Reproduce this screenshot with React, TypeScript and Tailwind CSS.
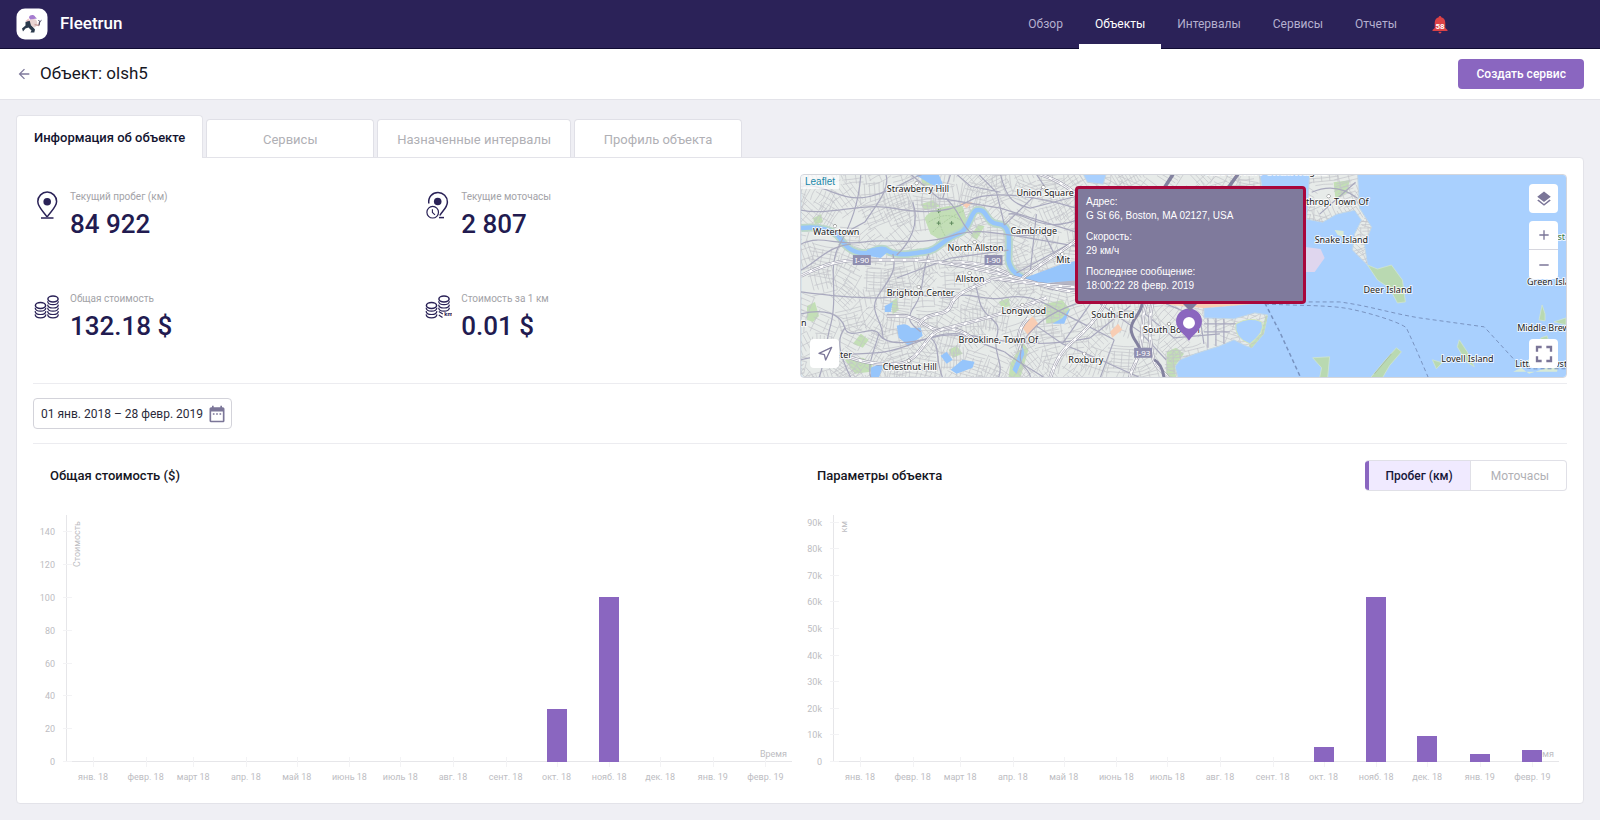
import React from "react";
import { MdArrowBack, MdDateRange, MdLayers, MdAdd, MdRemove, MdFullscreen } from "react-icons/md";
import { Navigation } from "lucide-react";

const NAV = ["Обзор", "Объекты", "Интервалы", "Сервисы", "Отчеты"];
const TABS = ["Сервисы", "Назначенные интервалы", "Профиль объекта"];

function Logo() {
  return (
    <svg viewBox="0 0 32 32" className="size-8" aria-hidden="true">
      <rect x=".5" y=".5" width="31" height="31" rx="8.500" fill="#fff" />
      <path d="M9.500 14 13 12.500 16.500 14 16 18 19 21.500 18.300 24.500 14.500 24.500 15.500 22.500 12.500 19.500 9.500 20.500 7 23.500 6 20.500 9.500 17.500Z" fill="#2b3a4c" />
      <path d="M13.500 12c3-1.500 6.500-1.500 7.500 1.500s-.5 5.500-3 6L15 17.500Z" fill="#e9d4d2" />
      <path d="M18.500 16.500 22.500 17.500 23.500 14" stroke="#c9a2a0" strokeWidth="1.300" fill="none" />
      <path d="M22.500 12 23.800 13.800 25.500 12.300M23.800 13.800 23 17.500" stroke="#45455f" strokeWidth="1" fill="none" />
      <path d="M13 9.500C13.600 6.600 18 6.200 19.300 9L21 10.500 14 11.500Z" fill="#a67ccf" />
      <path d="M9 13.500 12.500 10.500 13.500 13Z" fill="#edc0c2" />
    </svg>
  );
}

function Bell() {
  return (
    <svg viewBox="0 0 16 18" className="h-[18px] w-4" aria-label="58 уведомлений">
      <path d="M8 0c.8 0 1.300.6 1.300 1.300C12 2 13.300 4.200 13.300 7v5L15.500 14v1H.5v-1L2.700 12V7C2.700 4.200 4 2 6.700 1.300 6.700.6 7.200 0 8 0ZM6.500 15.800h3c0 1-.7 1.700-1.500 1.700s-1.500-.7-1.500-1.700Z" fill="#dc4246" />
      <text x="8" y="12.500" textAnchor="middle" fontSize="8" fontWeight="700" fill="#fff">58</text>
    </svg>
  );
}

const INK = "#2a2257";

function PinIcon() {
  return (
    <svg viewBox="0 0 28 30" className="h-[30px] w-7" fill="none" stroke={INK} strokeWidth="1.500">
      <path d="M14 27C12 23 4.800 17.500 4.800 11.500a9.400 9.400 0 0 1 18.800 0C23.600 17.500 16 23 14.200 27" />
      <circle cx="14.200" cy="11.800" r="3.800" fill={INK} stroke="none" />
      <path d="M8 28h12.500" />
    </svg>
  );
}

function PinClockIcon() {
  return (
    <svg viewBox="0 0 28 30" className="h-[30px] w-7" fill="none" stroke={INK} strokeWidth="1.500">
      <path d="M4.800 13.500C4 7 8.500 2.500 14 2.500a9.400 9.400 0 0 1 9.400 9.400C23.400 17.500 18 21.500 15.800 25.500" />
      <circle cx="13.700" cy="11.500" r="3.800" fill={INK} stroke="none" />
      <circle cx="8.700" cy="22.200" r="5.800" strokeWidth="1.200" fill="#fff" />
      <path d="M8.400 19.200V22.500L11 24.800" strokeWidth="1.100" />
      <path d="M15 27.600h5" />
    </svg>
  );
}

function Coins({ km }: { km?: boolean }) {
  const arc = (x: number, y: number) => `M${x - 5.400} ${y - 0.700}c.2 2 2.400 3.400 5.400 3.400s5.200-1.400 5.400-3.400`;
  return (
    <svg viewBox="0 0 28 30" className="h-[30px] w-7" fill="none" stroke={INK} strokeWidth="1.200">
      <ellipse cx="7.500" cy="13.500" rx="5.100" ry="2.900" strokeWidth="1.500" />
      <ellipse cx="20" cy="7" rx="5.100" ry="2.900" strokeWidth="1.500" />
      {[16.500, 19.800, 23.100].map((y) => <path key={y} d={arc(7.500, y)} />)}
      {(km ? [10, 13.300, 16.500] : [10, 13.300, 16.500, 19.800, 23.100]).map((y) => <path key={y} d={arc(20, y)} />)}
      {km && <path d="M14.800 19.500 18.800 22M14.800 23 18.500 25.500" />}
      {km && <text x="20.300" y="24" fontSize="6" fontWeight="700" fill={INK} stroke="none">km</text>}
    </svg>
  );
}

function Stat({ icon, label, value }: { icon: React.ReactNode; label: string; value: string }) {
  return (
    <div className="flex items-start">
      <div className="w-[37px] shrink-0">{icon}</div>
      <dl>
        <dt className="text-[10px] leading-[14px] text-[#a3a3a8]">{label}</dt>
        <dd className="mt-1 text-[26px] leading-8 font-medium text-[#221b50]">{value}</dd>
      </dl>
    </div>
  );
}

function seeded(seed: number) {
  let s = seed;
  return () => {
    s = (s * 16807) % 2147483647;
    return s / 2147483647;
  };
}

function buildStreets() {
  const rnd = seeded(4217);
  let d = "";
  for (let cy = -4; cy < 210; cy += 21) {
    for (let cx = -6; cx < 600; cx += 25) {
      const a = rnd() * Math.PI;
      const ca = Math.cos(a);
      const sa = Math.sin(a);
      const ox = cx + rnd() * 8;
      const oy = cy + rnd() * 8;
      const half = 10 + rnd() * 6;
      const step = 3 + rnd() * 2.5;
      if (rnd() < 0.08) continue;
      for (let o = -half; o <= half; o += step) {
        const bend = (rnd() - 0.5) * 5;
        const h = half * (0.6 + rnd() * 0.5);
        d += `M${(ox + o * ca - h * sa).toFixed(1)} ${(oy + o * sa + h * ca).toFixed(1)}Q${(ox + o * ca + bend).toFixed(1)} ${(oy + o * sa + bend).toFixed(1)} ${(ox + o * ca + h * sa).toFixed(1)} ${(oy + o * sa - h * ca).toFixed(1)}`;
      }
      for (let o = -half; o <= half; o += step * 2.2) {
        const h = half * (0.5 + rnd() * 0.5);
        d += `M${(ox - o * sa - h * ca).toFixed(1)} ${(oy + o * ca - h * sa).toFixed(1)}L${(ox - o * sa + h * ca).toFixed(1)} ${(oy + o * ca + h * sa).toFixed(1)}`;
      }
    }
  }
  return d;
}

const STREETS = buildStreets();

const LAND =
  "M0 0H283L287 8 303 10 306 0H460L462 12V129L404 134 404 144 434 145 455 139 468 141 464 160 452 174 446 172 434 166 420 172 395 180 380 186 375 193 378 204H0ZM510 0H558L560 34 572 53 565 71 568 91 553 76 555 60 562 46 555 36 537 40 523 48 507 45Z";

const ARTERIALS = [
  "M0 12C25 8 40 30 70 22S110 3 122 0", "M0 36C30 42 60 28 92 34S150 38 168 27 230 20 276 34",
  "M60 0C58 30 50 50 38 72S38 120 30 150 24 190 18 204", "M0 70C20 60 34 72 62 68S120 72 150 62 200 60 276 72",
  "M85 0C90 14 76 30 64 48L38 62", "M0 118C30 122 55 124 76 124S120 118 150 124", "M110 0 138 24 200 34 276 58",
  "M112 28C120 50 108 70 96 81M145 24C160 36 160 52 172 60", "M0 140C24 134 40 140 44 154S72 150 78 160 100 172 130 164 170 166 204 178",
  "M92 80C98 98 84 110 76 124S84 150 82 165", "M128 80C120 100 124 118 114 132S110 150 120 158", "M96 104 150 84 208 76",
  "M0 186C30 178 58 182 84 178S130 158 158 160 220 178 290 164", "M200 0C206 26 214 30 230 34L276 22",
  "M216 99 276 66M204 51 244 12 236 0", "M172 104C180 120 176 130 186 140S200 150 196 164 204 190 198 204",
  "M276 130C258 136 246 142 236 152S222 166 220 180 230 194 230 204", "M150 124C166 116 184 128 204 124S236 124 260 138L314 166",
  "M130 164C140 172 134 184 142 204M204 178C214 186 222 190 244 204", "M236 152 262 170 300 186 340 204",
  "M290 164 330 132M262 170 290 130M314 166 300 204M345 140 374 164 420 160", "M300 130 340 158 366 186M366 130 400 144 404 170",
  "M404 150H438M404 158H430M408 144V174M416 144V172M424 145V170", "M44 154C34 166 40 184 50 204M78 160C74 176 66 190 70 204",
  "M0 96C14 90 26 72 50 70M178 0 196 18 204 51M156 0 170 12 200 18M150 0 142 24", "M208 40C222 36 240 60 276 46M216 62 244 60 256 84M236 40 230 96",
  "M512 18C530 10 545 14 558 24M520 40 556 8",
];

const FREEWAYS = [
  "M0 102C23 90 40 86 60 86H113C156 88 176 96 200 100S250 116 276 118", "M190 104C220 108 250 112 276 113",
  "M86 142H104C120 144 130 158 140 156S160 154 176 168", "M38 180C60 188 76 192 98 190S124 160 140 156C180 146 210 138 246 124",
  "M118 152C124 136 146 144 150 132S166 116 190 106", "M222 104C244 86 262 78 276 66V20C262 8 250 4 240 0",
  "M152 88C180 88 196 94 208 100", "M250 204C254 190 262 176 272 168S296 146 306 128", "M346 130C340 146 344 160 340 176S330 196 330 204",
  "M352 130C348 150 350 166 352 180S362 196 368 204", "M220 176C216 164 218 154 228 144",
];

const PARKS = [
  "M124 44C130 34 150 30 162 32L166 48 158 58 140 66 130 60Z", "M6 132 14 128 18 142 12 148 6 146Z", "M120 30 132 26 140 32 124 36Z",
  "M170 62 178 50 184 52 176 66Z", "M44 186 62 184 72 190 70 198 54 200Z", "M244 130 262 126 270 136 262 148 246 150Z",
  "M210 190 222 168 228 176 220 204 208 204Z", "M367 178 376 174 384 180 375 192 376 204H366Z", "M12 44 20 40 22 48 14 50Z",
  "M52 170 60 160 68 166 62 174Z", "M120 0 132 0 134 10 122 12Z", "M148 176 156 172 162 180 152 184Z", "M534 8 550 6 548 18 536 26Z",
  "M466 141 471 144 466 160 452 176 449 172 461 160Z", "M198 128 208 124 210 132 202 134Z", "M90 128 96 124 98 136 92 140Z",
];

const LABELS: { t: string; x: number; y: number; dot?: [number, number] }[] = [
  { t: "Strawberry Hill", x: 86, y: 18, dot: [116, 9] }, { t: "Watertown", x: 12, y: 61, dot: [34, 52] },
  { t: "Union Square", x: 216, y: 22, dot: [243, 13] }, { t: "Cambridge", x: 210, y: 60 },
  { t: "North Allston", x: 147, y: 77, dot: [174, 68] }, { t: "Mit", x: 256, y: 89, dot: [262, 80] },
  { t: "Allston", x: 155, y: 108, dot: [169, 99] }, { t: "Brighton Center", x: 86, y: 122, dot: [118, 113] },
  { t: "Longwood", x: 201, y: 140, dot: [222, 131] }, { t: "Brookline, Town Of", x: 158, y: 169 },
  { t: "Chestnut Hill", x: 82, y: 196, dot: [108, 187] }, { t: "Roxbury", x: 268, y: 189, dot: [284, 180] },
  { t: "South End", x: 291, y: 144, dot: [311, 135] }, { t: "South Boston", x: 343, y: 159, dot: [369, 150] },
  { t: "Winthrop, Town Of", x: 490, y: 31, dot: [529, 22] }, { t: "Snake Island", x: 515, y: 69 },
  { t: "Deer Island", x: 564, y: 119 }, { t: "Green Isla", x: 728, y: 111 }, { t: "Middle Brews", x: 718, y: 157 },
  { t: "Lovell Island", x: 642, y: 188 }, { t: "Little Brewste", x: 716, y: 193 }, { t: "Harbor View / Orient Heights", x: 406, y: 1 },
  { t: "ter", x: 39, y: 184 }, { t: "n", x: 0, y: 152 },
];

const SHIELDS: [string, number, number][] = [["I-90", 52, 81], ["I-90", 184, 81], ["I-93", 334, 174]];

function MapDrawing() {
  return (
    <svg viewBox="0 0 767 204" preserveAspectRatio="xMidYMid slice" className="block size-full" aria-label="Карта Бостона">
      <defs>
        <clipPath id="land"><path d={LAND} /></clipPath>
      </defs>
      <rect width="767" height="204" fill="#a9d0fe" />
      <path d={LAND} fill="#e7ebe9" stroke="#c4d8e6" strokeWidth="1" />
      <g clipPath="url(#land)">
        {PARKS.map((d) => <path key={d} d={d} fill="#c3dfb6" />)}
        <path d={STREETS} fill="none" stroke="#c3c4ca" strokeWidth="0.700" />
        <path d="M124 44C130 34 150 30 162 32L166 48 158 58 140 66 130 60Z" fill="#c3dfb6" fillOpacity=".85" />
        <path d="M128 48Q146 36 160 46M132 58Q146 44 164 36M140 34Q136 50 146 64" fill="none" stroke="#a6c79b" strokeWidth=".8" strokeDasharray="2 1" />
        <path d="M138 35v4M136 37h4M138 47v4M136 49h4M151 47v4M149 49h4" stroke="#5f8a5d" strokeWidth="1" />
        <path d="M160 29 172 28 166 34ZM222 154 232 142 238 150 228 162ZM310 158 318 150 322 156 312 164ZM360 130H460V132L404 134Z" fill="#f8cdb4" />
        <path d="M240 111 276 104V119L250 116Z" fill="#b5b5c4" />
        <path d="M0 54C18 52 34 56 39 64 46 75 54 80 66 79 74 78 76 73 84 75 96 84 112 79 123 78 139 76 140 66 159 59 169 55 170 38 176 36 188 34 184 49 198 50 212 51 208 70 208 86 210 98 218 102 228 106" fill="none" stroke="#bbd7c8" strokeWidth="8" />
        <path d="M0 54C18 52 34 56 39 64 46 75 54 80 66 79 74 78 76 73 84 75 96 84 112 79 123 78 139 76 140 66 159 59 169 55 170 38 176 36 188 34 184 49 198 50 212 51 208 70 208 86 210 98 218 102 228 106" fill="none" stroke="#96c5fb" strokeWidth="4.500" />
        <path d="M66 76Q78 70 88 77L80 84 68 82ZM224 104 243 97 262 90 280 86V106L246 109 226 108ZM96 152Q106 148 110 154L120 154 122 162 108 172 98 164ZM84 132 92 128 90 138 84 138ZM150 196 162 186 174 188 172 194 156 200ZM70 194 84 188 78 204H70ZM114 0H138L144 14 130 10ZM212 196 222 172 224 180 216 200ZM140 182 146 178 152 186 146 190ZM252 150 262 144 270 134 264 150Z" fill="#96c5fb" />
        {ARTERIALS.map((d) => <path key={d} d={d} fill="none" stroke="#a9a9be" strokeWidth="1.200" />)}
        {FREEWAYS.map((d) => (
          <g key={d} fill="none">
            <path d={d} stroke="#9a9aab" strokeWidth="3.600" />
            <path d={d} stroke="#fff" strokeWidth="2.500" />
            <path d={d} stroke="#9a9aab" strokeWidth=".7" strokeDasharray="9 3" />
          </g>
        ))}
        <path d="M342 130C340 142 330 146 331 156S338 168 340 176M354 186Q362 190 364 204" fill="none" stroke="#83829f" strokeWidth="3" />
        <path d="M373 0 364 14M438 0 428 14" stroke="#83829f" strokeWidth="3.500" />
      </g>
      <path d="M436 150Q450 142 462 148 466 158 450 170 434 164 436 150Z" fill="#a9d0fe" stroke="#d3e5bb" />
      <path d="M506 73 521 75 525 84 515 98 505 98Z" fill="#dfd6ee" />
      <path d="M535 56 544 57 544 63 538 61ZM714 198 722 194 730 200 760 190 758 198Z" fill="#d8ead6" />
      <path d="M568 91 578 95 592 91 603 106 606 128 598 129 590 114 578 106ZM597 174 602 178 590 192 583 204H571L586 186ZM513 184 530 183 528 204H520L522 194ZM660 166 668 178 675 193 667 188 658 173ZM633 186 643 189 637 195ZM743 131 746 140 746 147 740 146ZM755 148 767 144V151ZM742 164 748 162 750 168H740Z" fill="#b9d9b1" stroke="#cfe4d2" strokeWidth=".8" />
      <path d="M575 200 592 180" stroke="#a3b5a0" strokeWidth=".8" fill="none" />
      <g fill="none" stroke="#7893c0" strokeWidth="1" strokeDasharray="4 3">
        <path d="M460 128H540C570 132 590 139 620 144L685 153 717 188Q724 196 740 195H767" />
        <path d="M465 130C500 132 530 131 550 135S600 148 607 154L617 176 629 204" />
        <path d="M465 129 480 158 501 204" strokeWidth="1.500" />
      </g>
      {SHIELDS.map(([t, x, y]) => (
        <g key={`${t}${x}`}>
          <rect x={x} y={y} width="18" height="10" fill="#8f8eaf" />
          <text x={x + 9} y={y + 8} textAnchor="middle" fontSize="8" fill="#fff" className="font-['Noto_Sans',sans-serif]">{t}</text>
        </g>
      ))}
      <g fontSize="9" fill="#232323" stroke="#fff" strokeOpacity=".8" strokeWidth="2" paintOrder="stroke" strokeLinejoin="round" className="font-['Noto_Sans',sans-serif]">
        {LABELS.map((l) => (
          <React.Fragment key={l.t}>
            {l.dot && <circle cx={l.dot[0]} cy={l.dot[1]} r="1.500" fill="#fff" stroke="#555" strokeOpacity="1" strokeWidth=".8" />}
            <text x={l.x} y={l.y}>{l.t}</text>
          </React.Fragment>
        ))}
        <text x="753" y="66" fill="#3b7a3b">ost</text>
      </g>
      <path d="M389 167C386 161 376 156 376 147.500a13 13 0 0 1 26 0C402 156 392 161 389 167Z" fill="#8b66bf" />
      <circle cx="389" cy="149" r="6" fill="#fff" />
    </svg>
  );
}

const mapButton = "flex size-[29px] items-center justify-center bg-white text-[#7b7698]";

function MapCard() {
  return (
    <div className="relative h-[204px] overflow-hidden rounded border border-[#d4d6dc]">
      <MapDrawing />
      <a href="#leaflet" className="absolute top-0 left-0 bg-white/70 px-1 font-['Liberation_Sans',sans-serif] text-[10px] leading-[14px] text-[#1787a8]">Leaflet</a>
      <div className="absolute top-[11px] left-[274px] h-[118px] w-[231px] rounded-sm border-3 border-[#a8073c] bg-[#7f7a9c] px-2 py-1.5 font-['Liberation_Sans',sans-serif] text-[10px] leading-[14px] text-white">
        <p>Адрес:<br />G St 66, Boston, MA 02127, USA</p>
        <p className="my-[7px]">Скорость:<br />29 км/ч</p>
        <p>Последнее сообщение:<br />18:00:22 28 февр. 2019</p>
        <svg viewBox="0 0 14 7" className="absolute top-[115px] left-[105px] h-[7px] w-3.5" aria-hidden="true">
          <path d="M0 0H14L7 7Z" fill="#7f7a9c" />
        </svg>
      </div>
      <div className="absolute top-[9px] right-2 flex flex-col gap-2">
        <button aria-label="Слои" className={`${mapButton} rounded`}><MdLayers className="size-[18px]" /></button>
        <div className="flex flex-col divide-y divide-[#d6d6de] overflow-hidden rounded">
          <button aria-label="Увеличить" className={mapButton}><MdAdd className="size-4" /></button>
          <button aria-label="Уменьшить" className={mapButton}><MdRemove className="size-4" /></button>
        </div>
      </div>
      <button aria-label="Показать объект" className={`${mapButton} absolute bottom-[9px] left-[9px] rounded`}><Navigation className="size-4" strokeWidth={2} /></button>
      <button aria-label="На весь экран" className={`${mapButton} absolute right-2 bottom-[9px] rounded`}><MdFullscreen className="size-7" /></button>
    </div>
  );
}

const MONTHS: [string, number][] = [
  ["янв. 18", 0], ["февр. 18", 31], ["март 18", 59], ["апр. 18", 90], ["май 18", 120], ["июнь 18", 151], ["июль 18", 181],
  ["авг. 18", 212], ["сент. 18", 243], ["окт. 18", 273], ["нояб. 18", 304], ["дек. 18", 334], ["янв. 19", 365], ["февр. 19", 396],
];

function BarChart({ unit, ticks, step, values }: { unit: string; ticks: string[]; step: number; values: number[] }) {
  const x = (days: number) => 60 + days * 1.698;
  return (
    <svg viewBox="0 0 767 290" className="block w-full" role="img" aria-label={unit}>
      <g stroke="#f3f3f5" strokeWidth="1">
        <path d="M33.500 15V262M33 261.500H759" stroke="#e6e6e9" />
        {ticks.map((t, i) => <path key={t} d={`M30 ${Math.round(261 - i * step) + 0.5}h9`} />)}
        {MONTHS.map(([m, d]) => <path key={m} d={`M${Math.round(x(d)) + 0.5} 257v10`} />)}
      </g>
      <g fontSize="9" fill="#bdbdc2">
        {ticks.map((t, i) => <text key={t} x="22" y={Math.round(265 - i * step)} textAnchor="end">{t}</text>)}
        {MONTHS.map(([m, d]) => <text key={m} x={x(d)} y="280" textAnchor="middle">{m}</text>)}
        <text x="754" y="257" textAnchor="end">Время</text>
        <text transform="rotate(-90 47 21)" x="47" y="21" textAnchor="end">{unit}</text>
      </g>
      {values.map((v, i) => v > 0 && (
        <rect key={MONTHS[i][0]} x={Math.round(x(MONTHS[i][1])) - 10} y={262 - v} width="20" height={v} fill="#8a66c0" />
      ))}
    </svg>
  );
}

const COST = [0, 0, 0, 0, 0, 0, 0, 0, 0, 53, 165, 0, 0, 0];
const MILEAGE = [0, 0, 0, 0, 0, 0, 0, 0, 0, 15, 165, 26, 8, 12];

export default function App() {
  return (
    <div className="flex min-h-screen flex-col bg-[#efeff4] font-['Roboto',sans-serif] text-[#16161f]">
      <header className="flex h-[49px] items-center border-b border-[#100b33] bg-[#2b2258] pr-[152px] pl-4">
        <Logo />
        <span className="ml-3 text-[17px] font-medium text-white">Fleetrun</span>
        <nav className="ml-auto flex h-full">
          {NAV.map((n) => (
            <a key={n} href="#nav" className={n === "Объекты" ? "-mb-px flex h-[49px] items-center border-b-5 border-white px-4 pt-1 text-[12px] text-white" : "flex items-center px-4 text-[12px] text-[#b5b0cf]"}>{n}</a>
          ))}
        </nav>
        <button className="ml-[19px] pt-0.5"><Bell /></button>
      </header>

      <div className="flex h-[51px] items-center border-b border-[#e3e3e9] bg-white px-4">
        <a href="#back" aria-label="Назад" className="text-[#7f7a9c]"><MdArrowBack className="size-4" /></a>
        <h1 className="ml-2 text-[17px]">Объект: olsh5</h1>
        <button className="ml-auto h-[30px] rounded bg-[#8a66c0] px-[18px] text-[12px] font-medium text-white">Создать сервис</button>
      </div>

      <main className="flex flex-1 flex-col px-4 pt-[15px] pb-4">
        <div className="flex items-end gap-[3px]" role="tablist">
          <button role="tab" aria-selected="true" className="relative -mb-px h-[43px] rounded-t border border-b-0 border-[#e3e3e9] bg-white px-[17px] pt-0.5 text-[13px] font-medium text-[#131430]">Информация об объекте</button>
          {TABS.map((t) => (
            <button key={t} role="tab" className="h-[38px] min-w-[168px] rounded-t border border-b-0 border-[#e0e0e7] bg-white px-[19px] pt-0.5 text-[13px] text-[#b0b0b5]">{t}</button>
          ))}
        </div>

        <section className="flex-1 rounded rounded-tl-none border border-[#e3e3e9] bg-white px-4 pb-3">
          <div className="grid grid-cols-2 border-b border-[#ececf0] pt-4 pb-[5px]">
            <div className="grid grid-cols-[51%_49%] content-start gap-y-[52px] pt-4">
              <Stat icon={<PinIcon />} label="Текущий пробег (км)" value="84 922" />
              <Stat icon={<PinClockIcon />} label="Текущие моточасы" value="2 807" />
              <Stat icon={<Coins />} label="Общая стоимость" value="132.18 $" />
              <Stat icon={<Coins km />} label="Стоимость за 1 км" value="0.01 $" />
            </div>
            <MapCard />
          </div>

          <div className="border-b border-[#ececf0] py-3.5">
            <button className="flex h-[31px] w-[199px] items-center justify-between rounded border border-[#d3d3da] pr-1 pl-[7px] text-[12px] whitespace-nowrap text-[#2a2a3a]">
              01 янв. 2018 – 28 февр. 2019
              <MdDateRange className="size-5 text-[#7b7698]" />
            </button>
          </div>

          <div className="grid grid-cols-2 pt-4">
            <div>
              <div className="flex h-[31px] items-center pl-[17px]">
                <h2 className="text-[13px] font-medium">Общая стоимость ($)</h2>
              </div>
              <div className="mt-[9px]">
                <BarChart unit="Стоимость" ticks={["0", "20", "40", "60", "80", "100", "120", "140"]} step={32.8} values={COST} />
              </div>
            </div>
            <div>
              <div className="flex h-[31px] items-center justify-between pl-[17px]">
                <h2 className="text-[13px] font-medium">Параметры объекта</h2>
                <div className="flex h-[31px] overflow-hidden rounded border border-l-0 border-[#e0e0e7] text-[12px]">
                  <button aria-pressed="true" className="border-r border-l-4 border-r-[#e0e0e7] border-l-[#8a66c0] bg-[#f0eaff] px-[17px] font-medium text-[#17173a]">Пробег (км)</button>
                  <button aria-pressed="false" className="pr-[17px] pl-5 text-[#b0b0b5]">Моточасы</button>
                </div>
              </div>
              <div className="mt-[9px]">
                <BarChart unit="км" ticks={["0", "10k", "20k", "30k", "40k", "50k", "60k", "70k", "80k", "90k"]} step={26.6} values={MILEAGE} />
              </div>
            </div>
          </div>
        </section>
      </main>
    </div>
  );
}
